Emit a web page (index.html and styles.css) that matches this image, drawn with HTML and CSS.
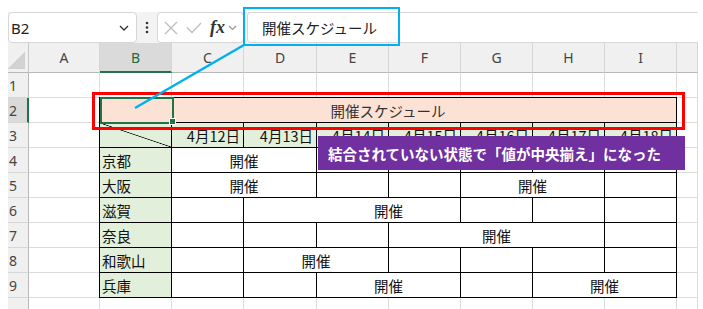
FILE: index.html
```html
<!DOCTYPE html>
<html lang="ja">
<head>
    <meta charset="UTF-8">
    <meta name="viewport" content="width=device-width, initial-scale=1.0">
    <title>開催スケジュール</title>
    <link rel="stylesheet" href="styles.css">
</head>
<body>
    <div class="app">
        <!-- name box / formula bar -->
        <div class="toolbar">
            <div class="namebox">
                <span>B2</span>
                <svg width="10" height="6" viewBox="0 0 10 6"><path d="M1 1l4 4 4-4" fill="none" stroke="#333" stroke-width="1.3"/></svg>
            </div>
            <div class="more">
                <svg width="4" height="13" viewBox="0 0 4 13" fill="#333"><circle cx="2" cy="2" r="1.3"/><circle cx="2" cy="6.5" r="1.3"/><circle cx="2" cy="11" r="1.3"/></svg>
            </div>
            <div class="fxbox">
                <svg class="ic-x" width="14" height="14" viewBox="0 0 14 14"><path d="M1 1L13 13M13 1L1 13" fill="none" stroke="#bdbdbd" stroke-width="1.3"/></svg>
                <svg class="ic-ok" width="16" height="12" viewBox="0 0 16 12"><path d="M1 5.5L6 10.5L15 1" fill="none" stroke="#bdbdbd" stroke-width="1.3"/></svg>
                <span class="fx">fx</span>
                <svg width="9" height="6" viewBox="0 0 9 6"><path d="M1 1l3.5 3.5L8 1" fill="none" stroke="#999" stroke-width="1.2"/></svg>
            </div>
            <div class="formula">開催スケジュール</div>
        </div>

        <!-- worksheet -->
        <div class="sheet">
            <div class="corner"></div>
            <div class="ch">A</div>
            <div class="ch sel">B</div>
            <div class="ch">C</div>
            <div class="ch">D</div>
            <div class="ch">E</div>
            <div class="ch">F</div>
            <div class="ch">G</div>
            <div class="ch">H</div>
            <div class="ch">I</div>
            <div class="ch"></div>

            <div class="rh">1</div>
            <div class="c"></div><div class="c"></div><div class="c"></div><div class="c"></div><div class="c"></div>
            <div class="c"></div><div class="c"></div><div class="c"></div><div class="c"></div><div class="c"></div>

            <div class="rh sel">2</div><div class="c"></div><div class="c"></div>
            <div class="rh">3</div><div class="c"></div><div class="c"></div>
            <div class="rh">4</div><div class="c"></div><div class="c"></div>
            <div class="rh">5</div><div class="c"></div><div class="c"></div>
            <div class="rh">6</div><div class="c"></div><div class="c"></div>
            <div class="rh">7</div><div class="c"></div><div class="c"></div>
            <div class="rh">8</div><div class="c"></div><div class="c"></div>
            <div class="rh">9</div><div class="c"></div><div class="c"></div>

            <div class="rh"></div>
            <div class="c"></div><div class="c"></div><div class="c"></div><div class="c"></div><div class="c"></div>
            <div class="c"></div><div class="c"></div><div class="c"></div><div class="c"></div><div class="c"></div>

            <!-- schedule table B2:I9 -->
            <div class="table">
                <div class="t title">開催スケジュール</div>

                <div class="t head diag"></div>
                <div class="t date">4月12日</div>
                <div class="t date">4月13日</div>
                <div class="t date">4月14日</div>
                <div class="t date">4月15日</div>
                <div class="t date">4月16日</div>
                <div class="t date">4月17日</div>
                <div class="t date">4月18日</div>

                <div class="t head">京都</div>
                <div class="t on s2">開催</div>
                <div class="t"></div><div class="t"></div><div class="t"></div><div class="t"></div><div class="t"></div>

                <div class="t head">大阪</div>
                <div class="t on s2">開催</div>
                <div class="t"></div><div class="t"></div>
                <div class="t on s2">開催</div>
                <div class="t"></div>

                <div class="t head">滋賀</div>
                <div class="t"></div>
                <div class="t nr"></div>
                <div class="t on s2">開催</div>
                <div class="t"></div><div class="t"></div><div class="t"></div>

                <div class="t head">奈良</div>
                <div class="t"></div><div class="t"></div><div class="t"></div>
                <div class="t on s3">開催</div>
                <div class="t"></div>

                <div class="t head">和歌山</div>
                <div class="t"></div>
                <div class="t on s2">開催</div>
                <div class="t"></div><div class="t"></div><div class="t"></div><div class="t"></div>

                <div class="t head">兵庫</div>
                <div class="t"></div><div class="t"></div>
                <div class="t on s2">開催</div>
                <div class="t"></div>
                <div class="t on s2">開催</div>

                <div class="selection"><span class="handle"></span></div>
            </div>
        </div>

        <!-- annotations -->
        <div class="mark-red"></div>
        <div class="mark-cyan"></div>
        <svg class="leader" width="703" height="309" viewBox="0 0 703 309"><line x1="244" y1="45" x2="135" y2="108" stroke="#00b0f0" stroke-width="2.5"/></svg>
        <div class="callout">結合されていない状態で「値が中央揃え」になった</div>
    </div>
</body>
</html>
```

FILE: styles.css
```css
body {
    margin: 0;
    font-family: "Noto Sans", "Noto Sans CJK JP", sans-serif;
    color: #222;
}

.app {
    position: relative;
    width: 703px;
    height: 309px;
    overflow: hidden;
    background: #fff;
}

/* formula bar */
.toolbar {
    display: flex;
    height: 31px;
    margin: 12px 5px 0 8px;
    background: #f3f3f3;
}

.namebox {
    width: 129px;
    box-sizing: border-box;
    display: flex;
    align-items: center;
    justify-content: space-between;
    padding: 0 7px 0 2px;
    background: #fff;
    border: 1px solid #d6d6d6;
    border-radius: 4px;
    font-size: 15px;
}

.more {
    width: 20px;
    display: flex;
    align-items: center;
    justify-content: center;
}

.fxbox {
    width: 87px;
    box-sizing: border-box;
    display: flex;
    align-items: center;
    padding-left: 6px;
    background: #fff;
    border: 1px solid #d6d6d6;
    border-radius: 4px;
}

.ic-ok {
    margin-left: 8px;
}

.fx {
    margin: 0 3px 0 8px;
    font-family: "Liberation Serif", serif;
    font-style: italic;
    font-weight: bold;
    font-size: 18px;
    color: #333;
}

.formula {
    flex: 1;
    margin-left: 3px;
    display: flex;
    align-items: center;
    padding-left: 14px;
    background: #fff;
    border: 1px solid #d6d6d6;
    border-right: none;
    border-radius: 4px 0 0 4px;
    font-family: "Noto Sans CJK JP", sans-serif;
    font-size: 14.5px;
}

/* worksheet grid */
.sheet {
    display: grid;
    grid-template-columns: 21px 71px 72px 72px 73px 72px 72px 72px 72px 72px 21px;
    grid-template-rows: 30px repeat(10, 25px);
    margin-left: 8px;
}

.sheet > div {
    box-sizing: border-box;
}

.c {
    border-right: 1px solid #dcdcdc;
    border-bottom: 1px solid #dcdcdc;
}

.corner {
    background: #f0f0f0 linear-gradient(to bottom right, transparent 50%, #d2d2d2 50%) no-repeat right 3px bottom 3px / 17px 17px;
    border-right: 1px solid #c8c8c8;
    border-bottom: 1px solid #b8b8b8;
}

.ch {
    display: flex;
    align-items: center;
    justify-content: center;
    background: #f0f0f0;
    border-right: 1px solid #d6d6d6;
    border-bottom: 1px solid #b8b8b8;
    font-size: 14px;
    color: #444;
}

.ch.sel {
    background: #dadada;
    border-bottom: 2px solid #217346;
    color: #1d6b3e;
}

.rh {
    display: flex;
    align-items: center;
    padding-left: 1px;
    background: #f0f0f0;
    border-right: 1px solid #b8b8b8;
    border-bottom: 1px solid #d6d6d6;
    font-size: 14px;
    color: #444;
}

.rh.sel {
    background: #dadada;
    border-right: 2px solid #217346;
}

/* schedule table */
.sheet > .table {
    grid-column: 3 / 11;
    grid-row: 3 / 11;
    margin: -1px 0 0 -1px;
    position: relative;
    display: grid;
    grid-template-columns: 72px 72px 73px 72px 72px 72px 72px 72px;
    grid-template-rows: repeat(8, 25px);
    border-top: 1px solid #000;
    border-left: 1px solid #000;
    background: #fff;
    font-family: "Noto Sans CJK JP", sans-serif;
    font-size: 14.5px;
    color: #111;
}

.t {
    box-sizing: border-box;
    display: flex;
    align-items: center;
    border-right: 1px solid #000;
    border-bottom: 1px solid #000;
    white-space: nowrap;
}

.t.nr {
    border-right: none;
}

.title {
    grid-column: span 8;
    justify-content: center;
    background: #fbe2d5;
    color: #333;
}

.head {
    padding-left: 2px;
    background: #e2efda;
}

.diag {
    background: linear-gradient(to top right, transparent calc(50% - 0.7px), #000 50%, transparent calc(50% + 0.7px)), #e2efda;
}

.date {
    justify-content: flex-end;
    padding-right: 3px;
    background: #e2efda;
}

.on {
    justify-content: center;
}

.s2 {
    grid-column: span 2;
}

.s3 {
    grid-column: span 3;
}

.selection {
    position: absolute;
    left: 0;
    top: -1px;
    width: 74px;
    height: 27px;
    box-sizing: border-box;
    border: 2px solid #217346;
}

.handle {
    position: absolute;
    left: 67px;
    top: 19px;
    width: 5px;
    height: 5px;
    background: #217346;
    border: 1px solid #fff;
}

/* annotations */
.mark-red {
    position: absolute;
    left: 92px;
    top: 92px;
    width: 593px;
    height: 38px;
    box-sizing: border-box;
    border: 3px solid #ff0000;
}

.mark-cyan {
    position: absolute;
    left: 243px;
    top: 7px;
    width: 157px;
    height: 39px;
    box-sizing: border-box;
    border: 2px solid #00b0f0;
}

.leader {
    position: absolute;
    left: 0;
    top: 0;
    pointer-events: none;
}

.callout {
    position: absolute;
    left: 318px;
    top: 136px;
    width: 367px;
    height: 34px;
    box-sizing: border-box;
    display: flex;
    align-items: center;
    padding-left: 10px;
    background: #7030a0;
    color: #fff;
    font-family: "Noto Sans CJK JP", sans-serif;
    font-weight: bold;
    font-size: 14.5px;
    white-space: nowrap;
}
```
